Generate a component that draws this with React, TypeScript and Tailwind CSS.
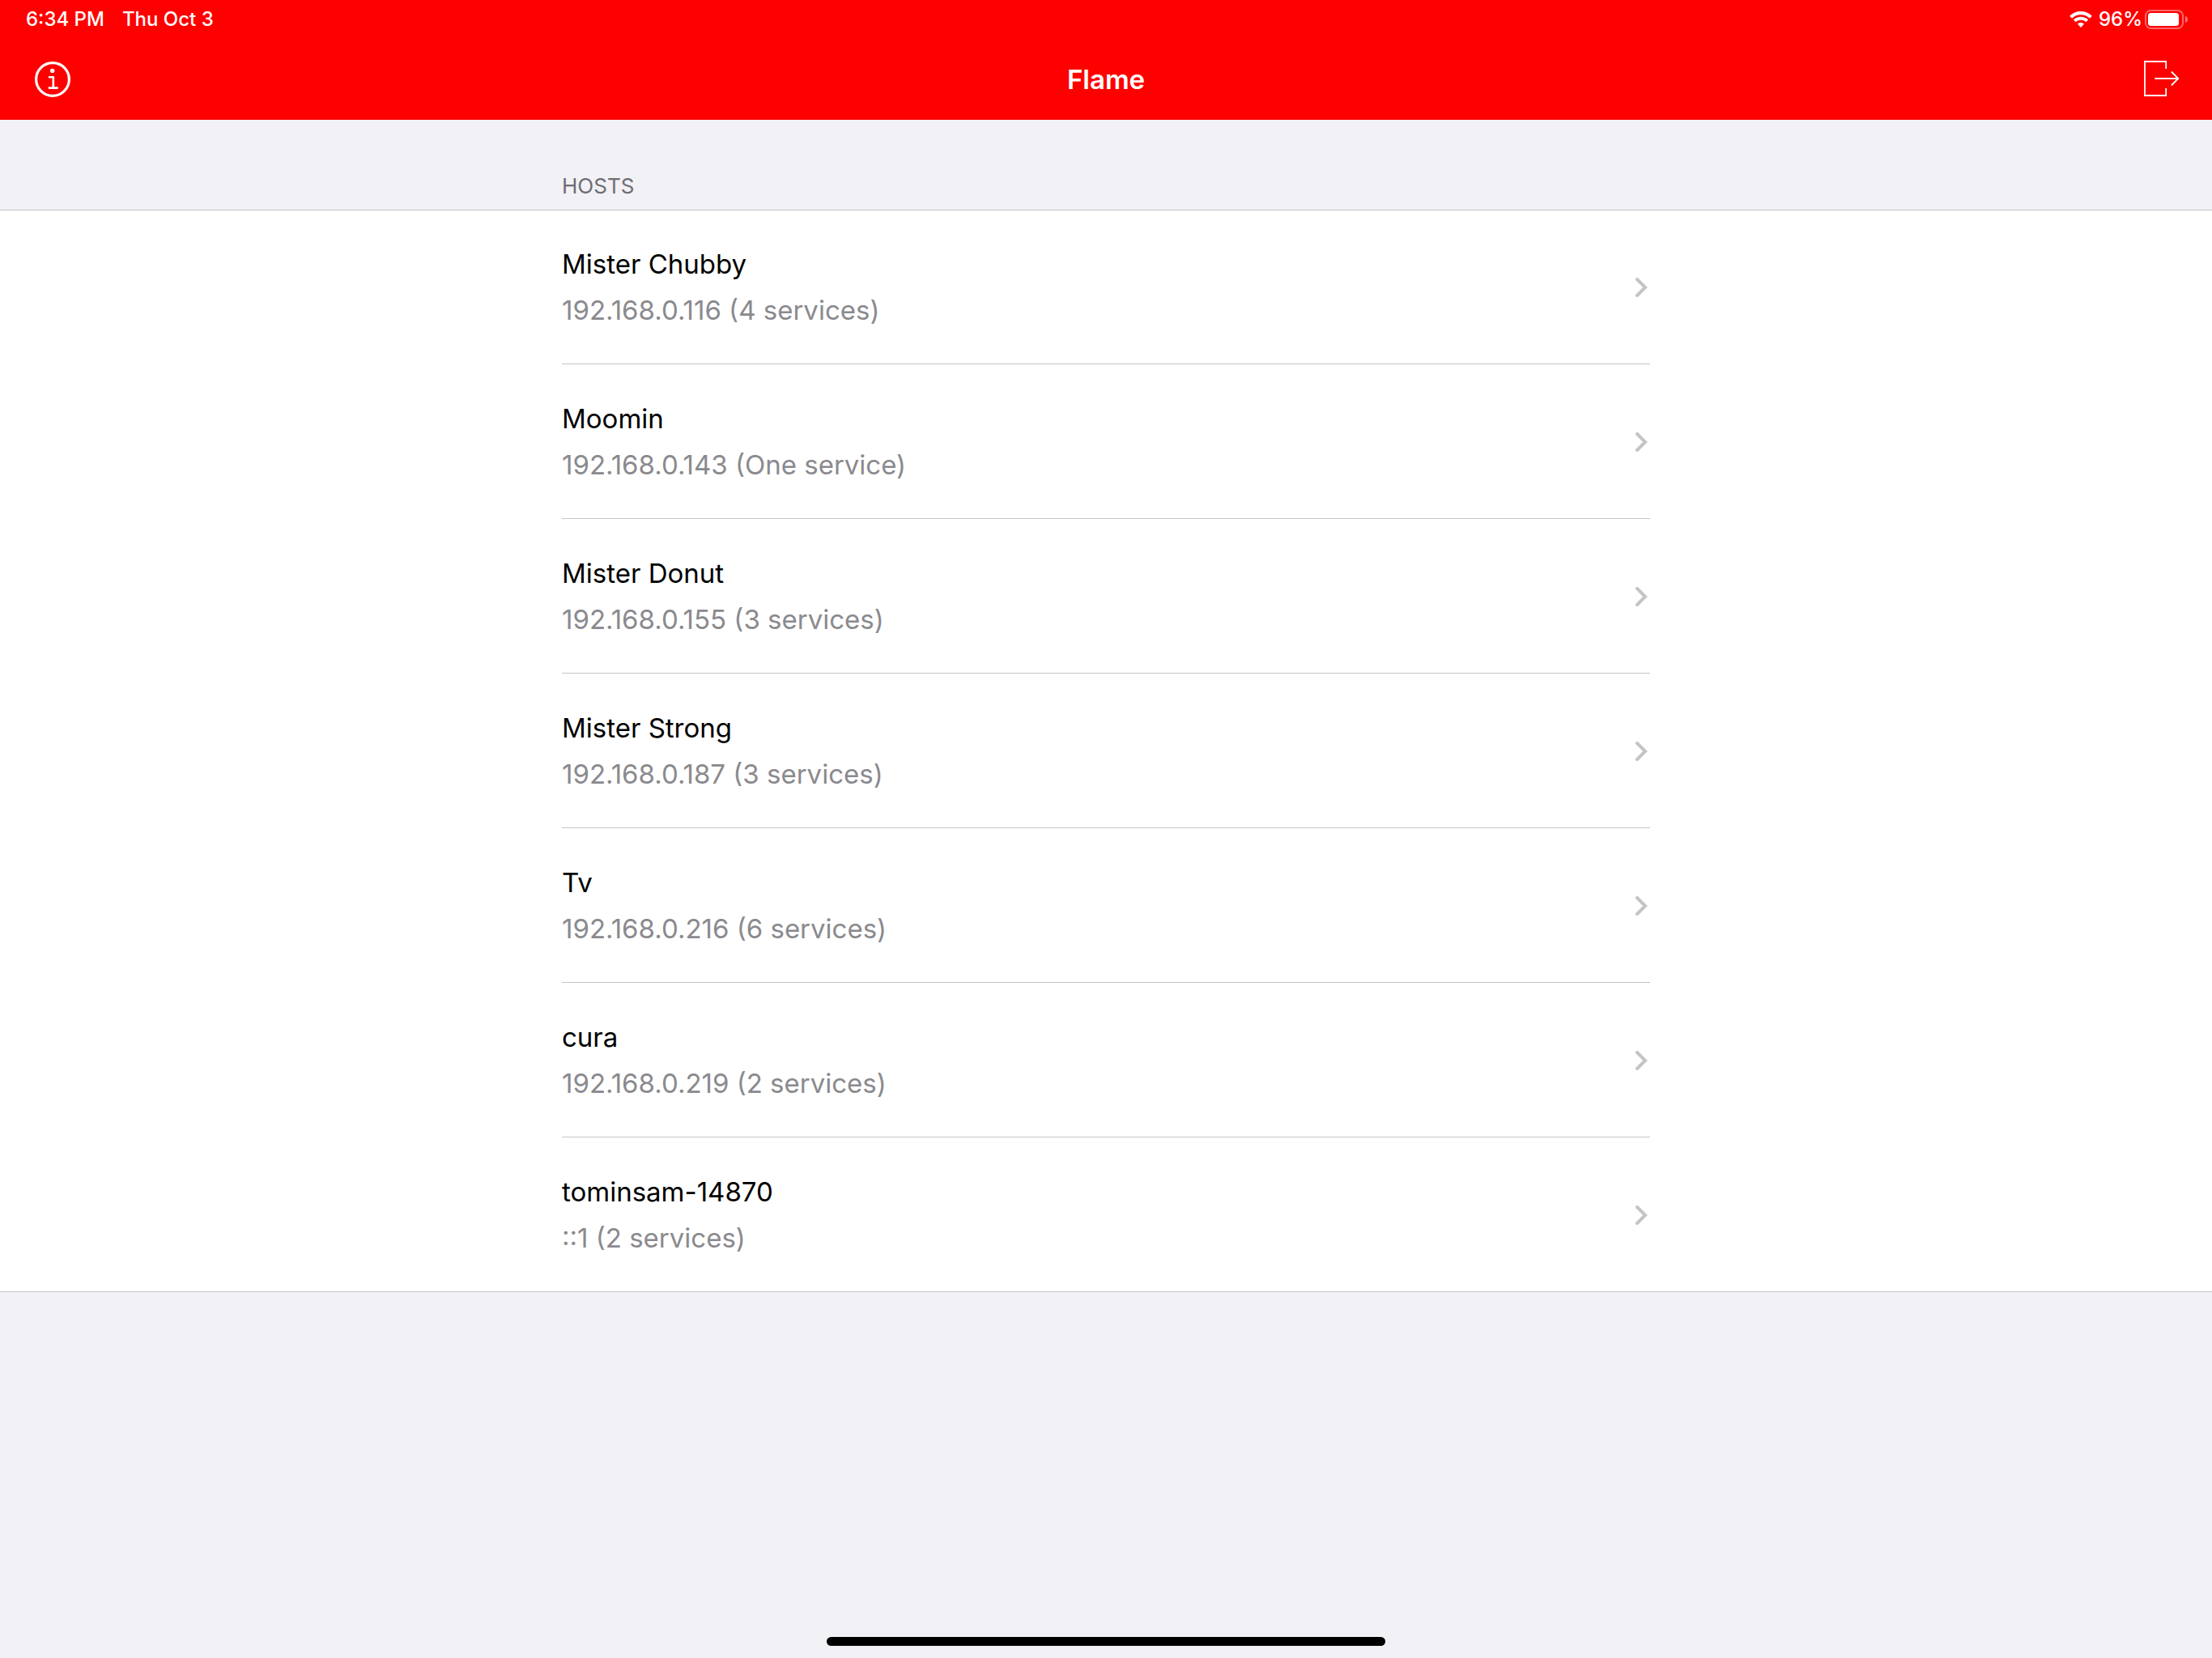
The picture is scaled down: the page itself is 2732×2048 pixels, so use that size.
const hosts = [
  { name: "Mister Chubby", detail: "192.168.0.116 (4 services)" },
  { name: "Moomin", detail: "192.168.0.143 (One service)" },
  { name: "Mister Donut", detail: "192.168.0.155 (3 services)" },
  { name: "Mister Strong", detail: "192.168.0.187 (3 services)" },
  { name: "Tv", detail: "192.168.0.216 (6 services)" },
  { name: "cura", detail: "192.168.0.219 (2 services)" },
  { name: "tominsam-14870", detail: "::1 (2 services)" },
];

function WifiIcon() {
  return (
    <svg width="28" height="20" viewBox="0 0 28 20" fill="none" aria-hidden="true">
      <path d="M1.600 7.200C8.500.4 19.500.4 26.400 7.200" stroke="#fff" strokeWidth="4.200" />
      <path d="M6.200 11.800C10.600 7.800 17.400 7.800 21.800 11.800" stroke="#fff" strokeWidth="4" />
      <path d="M9.900 15.600C12.200 13.400 15.800 13.400 18.100 15.600L14 19.900Z" fill="#fff" />
    </svg>
  );
}

function BatteryIcon() {
  return (
    <svg width="54" height="24" viewBox="0 0 54 24" fill="none" aria-hidden="true">
      <rect x="1" y="1" width="46" height="22" rx="6.500" stroke="#fff" strokeOpacity=".4" strokeWidth="2" />
      <rect x="4" y="4" width="38" height="16" rx="3.500" fill="#fff" />
      <path d="M50 8c2 .6 3 2.100 3 4s-1 3.400-3 4z" fill="#fff" fillOpacity=".45" />
    </svg>
  );
}

function InfoIcon() {
  return (
    <svg width="44" height="44" viewBox="0 0 44 44" fill="none" stroke="#fff" aria-hidden="true">
      <circle cx="22" cy="22" r="20.400" strokeWidth="3.200" />
      <circle cx="21.700" cy="11.400" r="2.700" fill="#fff" stroke="none" />
      <path d="M18 19.200h4.800v13.500M17.800 32.600h10" strokeWidth="2.600" strokeLinecap="round" strokeLinejoin="round" />
    </svg>
  );
}

function ExitIcon() {
  return (
    <svg width="44" height="44" viewBox="0 0 44 44" fill="none" stroke="#fff" aria-hidden="true">
      <path d="M27.200 10V1H1v42h26.200v-9" strokeWidth="1.800" />
      <path d="M13.300 22H42" strokeWidth="1.900" />
      <path d="M33.800 13.500 42.300 22l-8.500 8.500" strokeWidth="1.800" />
    </svg>
  );
}

function Chevron() {
  return (
    <svg width="18" height="24" viewBox="0 0 18 24" fill="none" aria-hidden="true">
      <path d="M2 2 12 12 2 22" stroke="#c4c4c6" strokeWidth="4" strokeLinecap="round" />
    </svg>
  );
}

export default function App() {
  return (
    <div className="flex min-h-screen flex-col bg-[#f2f1f6] font-['Inter',sans-serif] text-black">
      <header className="bg-[#ff0000] text-white">
        <div className="flex h-12 items-center justify-between pr-[29px] pl-8 text-2xl font-medium">
          <div className="flex gap-[22px]">
            <span>6:34 PM</span>
            <span>Thu Oct 3</span>
          </div>
          <div className="flex items-center">
            <WifiIcon />
            <span className="mr-[3px] ml-2">96%</span>
            <BatteryIcon />
          </div>
        </div>
        <nav className="grid h-25 grid-cols-[1fr_auto_1fr] items-center px-10">
          <button type="button" aria-label="Info" className="ml-[3px] justify-self-start">
            <InfoIcon />
          </button>
          <h1 className="text-[33px] leading-[50px] font-semibold">Flame</h1>
          <button type="button" aria-label="Exit" className="justify-self-end pb-0.5">
            <ExitIcon />
          </button>
        </nav>
      </header>

      <main className="flex-1">
        <h2 className="mx-auto w-full max-w-[1344px] pt-16 pb-3 text-[26px] leading-[35px] text-[#6d6d72]">
          HOSTS
        </h2>
        <ul className="border-y border-[#c6c6c8] bg-white">
          {hosts.map((host) => (
            <li key={host.name} className="group mx-auto max-w-[1344px] first:-mt-px">
              <a
                href="#"
                className="flex items-center justify-between border-b border-[#c6c6c8] pt-[39px] pb-[37px] group-last:border-b-0"
              >
                <span className="flex flex-col text-[33px] leading-[57px]">
                  <span>{host.name}</span>
                  <span className="text-[#8a8a8e]">{host.detail}</span>
                </span>
                <Chevron />
              </a>
            </li>
          ))}
        </ul>
      </main>

      <footer className="flex justify-center pb-[15px]">
        <div className="h-[11px] w-[690px] rounded-full bg-black" />
      </footer>
    </div>
  );
}
